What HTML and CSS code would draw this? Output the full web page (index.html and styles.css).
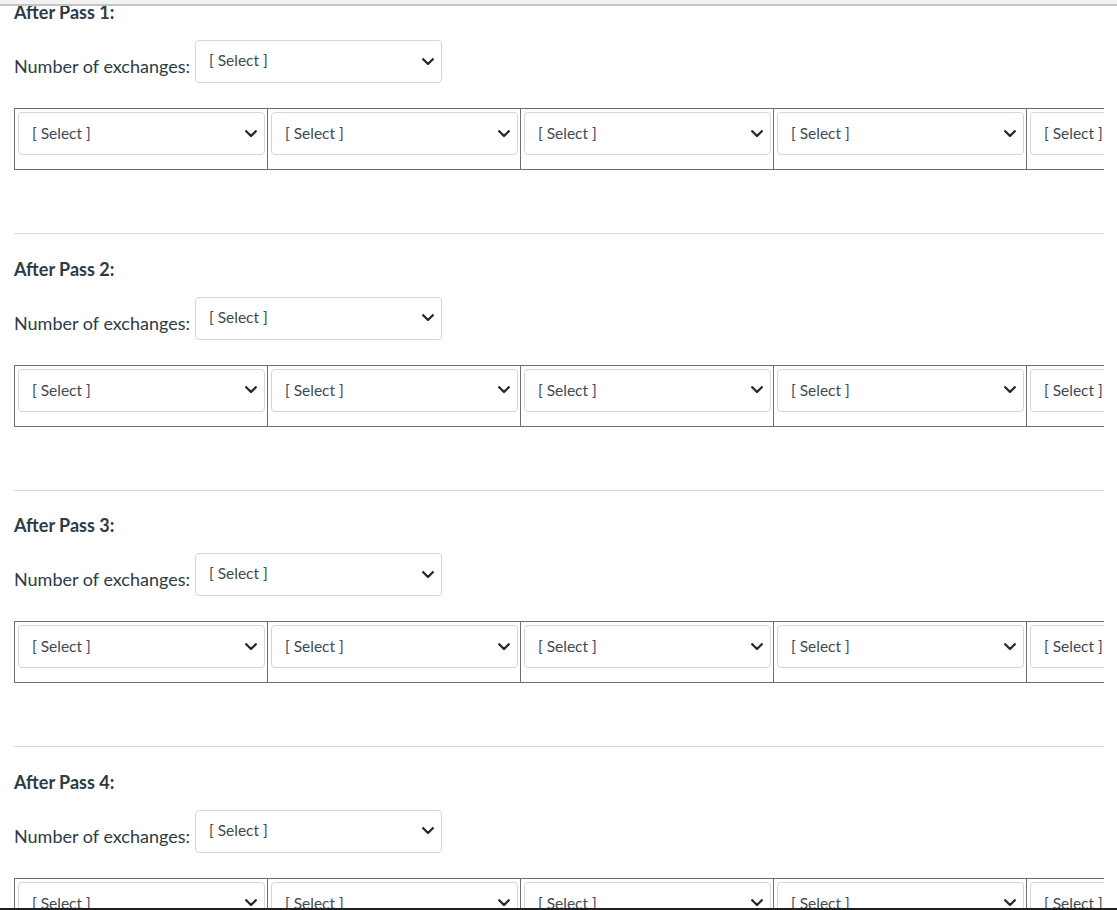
FILE: index.html
```html
<!DOCTYPE html>
<html lang="en">
<head>
<meta charset="utf-8">
<title>Passes</title>
<link rel="stylesheet" href="styles.css">
</head>
<body>
<div class="topbar"></div>
<main class="page">
  <section class="pass">
    <h4 class="pass-title">After Pass 1:</h4>
    <div class="exchanges">
      <span class="exchanges-label">Number of exchanges:</span>
      <div class="select select-wide"><span>[ Select ]</span><svg class="chev" viewBox="0 0 12 8" width="12" height="8"><polyline points="1.2,1.2 6,6 10.8,1.2"/></svg></div>
    </div>
    <div class="table-wrap">
      <div class="cells">
        <div class="cell"><div class="select"><span>[ Select ]</span><svg class="chev" viewBox="0 0 12 8" width="12" height="8"><polyline points="1.2,1.2 6,6 10.8,1.2"/></svg></div></div>
        <div class="cell"><div class="select"><span>[ Select ]</span><svg class="chev" viewBox="0 0 12 8" width="12" height="8"><polyline points="1.2,1.2 6,6 10.8,1.2"/></svg></div></div>
        <div class="cell"><div class="select"><span>[ Select ]</span><svg class="chev" viewBox="0 0 12 8" width="12" height="8"><polyline points="1.2,1.2 6,6 10.8,1.2"/></svg></div></div>
        <div class="cell"><div class="select"><span>[ Select ]</span><svg class="chev" viewBox="0 0 12 8" width="12" height="8"><polyline points="1.2,1.2 6,6 10.8,1.2"/></svg></div></div>
        <div class="cell"><div class="select"><span>[ Select ]</span><svg class="chev" viewBox="0 0 12 8" width="12" height="8"><polyline points="1.2,1.2 6,6 10.8,1.2"/></svg></div></div>
      </div>
    </div>
    <hr class="rule">
  </section>
  <section class="pass">
    <h4 class="pass-title">After Pass 2:</h4>
    <div class="exchanges">
      <span class="exchanges-label">Number of exchanges:</span>
      <div class="select select-wide"><span>[ Select ]</span><svg class="chev" viewBox="0 0 12 8" width="12" height="8"><polyline points="1.2,1.2 6,6 10.8,1.2"/></svg></div>
    </div>
    <div class="table-wrap">
      <div class="cells">
        <div class="cell"><div class="select"><span>[ Select ]</span><svg class="chev" viewBox="0 0 12 8" width="12" height="8"><polyline points="1.2,1.2 6,6 10.8,1.2"/></svg></div></div>
        <div class="cell"><div class="select"><span>[ Select ]</span><svg class="chev" viewBox="0 0 12 8" width="12" height="8"><polyline points="1.2,1.2 6,6 10.8,1.2"/></svg></div></div>
        <div class="cell"><div class="select"><span>[ Select ]</span><svg class="chev" viewBox="0 0 12 8" width="12" height="8"><polyline points="1.2,1.2 6,6 10.8,1.2"/></svg></div></div>
        <div class="cell"><div class="select"><span>[ Select ]</span><svg class="chev" viewBox="0 0 12 8" width="12" height="8"><polyline points="1.2,1.2 6,6 10.8,1.2"/></svg></div></div>
        <div class="cell"><div class="select"><span>[ Select ]</span><svg class="chev" viewBox="0 0 12 8" width="12" height="8"><polyline points="1.2,1.2 6,6 10.8,1.2"/></svg></div></div>
      </div>
    </div>
    <hr class="rule">
  </section>
  <section class="pass">
    <h4 class="pass-title">After Pass 3:</h4>
    <div class="exchanges">
      <span class="exchanges-label">Number of exchanges:</span>
      <div class="select select-wide"><span>[ Select ]</span><svg class="chev" viewBox="0 0 12 8" width="12" height="8"><polyline points="1.2,1.2 6,6 10.8,1.2"/></svg></div>
    </div>
    <div class="table-wrap">
      <div class="cells">
        <div class="cell"><div class="select"><span>[ Select ]</span><svg class="chev" viewBox="0 0 12 8" width="12" height="8"><polyline points="1.2,1.2 6,6 10.8,1.2"/></svg></div></div>
        <div class="cell"><div class="select"><span>[ Select ]</span><svg class="chev" viewBox="0 0 12 8" width="12" height="8"><polyline points="1.2,1.2 6,6 10.8,1.2"/></svg></div></div>
        <div class="cell"><div class="select"><span>[ Select ]</span><svg class="chev" viewBox="0 0 12 8" width="12" height="8"><polyline points="1.2,1.2 6,6 10.8,1.2"/></svg></div></div>
        <div class="cell"><div class="select"><span>[ Select ]</span><svg class="chev" viewBox="0 0 12 8" width="12" height="8"><polyline points="1.2,1.2 6,6 10.8,1.2"/></svg></div></div>
        <div class="cell"><div class="select"><span>[ Select ]</span><svg class="chev" viewBox="0 0 12 8" width="12" height="8"><polyline points="1.2,1.2 6,6 10.8,1.2"/></svg></div></div>
      </div>
    </div>
    <hr class="rule">
  </section>
  <section class="pass">
    <h4 class="pass-title">After Pass 4:</h4>
    <div class="exchanges">
      <span class="exchanges-label">Number of exchanges:</span>
      <div class="select select-wide"><span>[ Select ]</span><svg class="chev" viewBox="0 0 12 8" width="12" height="8"><polyline points="1.2,1.2 6,6 10.8,1.2"/></svg></div>
    </div>
    <div class="table-wrap">
      <div class="cells">
        <div class="cell"><div class="select"><span>[ Select ]</span><svg class="chev" viewBox="0 0 12 8" width="12" height="8"><polyline points="1.2,1.2 6,6 10.8,1.2"/></svg></div></div>
        <div class="cell"><div class="select"><span>[ Select ]</span><svg class="chev" viewBox="0 0 12 8" width="12" height="8"><polyline points="1.2,1.2 6,6 10.8,1.2"/></svg></div></div>
        <div class="cell"><div class="select"><span>[ Select ]</span><svg class="chev" viewBox="0 0 12 8" width="12" height="8"><polyline points="1.2,1.2 6,6 10.8,1.2"/></svg></div></div>
        <div class="cell"><div class="select"><span>[ Select ]</span><svg class="chev" viewBox="0 0 12 8" width="12" height="8"><polyline points="1.2,1.2 6,6 10.8,1.2"/></svg></div></div>
        <div class="cell"><div class="select"><span>[ Select ]</span><svg class="chev" viewBox="0 0 12 8" width="12" height="8"><polyline points="1.2,1.2 6,6 10.8,1.2"/></svg></div></div>
      </div>
    </div>
    <hr class="rule">
  </section>
</main>
<div class="bottombar"></div>
</body>
</html>
```

FILE: styles.css
```css
html, body {
  margin: 0;
  padding: 0;
  background: #ffffff;
}

body {
  font-family: Lato, "Open Sans", "Liberation Sans", sans-serif;
  color: #2d3b45;
  height: 910px;
  overflow: hidden;
}

.topbar {
  position: fixed;
  top: 0;
  left: 0;
  right: 0;
  height: 4px;
  background: #f2f2f2;
  border-bottom: 2px solid #c4c4c4;
  z-index: 5;
}

.bottombar {
  position: fixed;
  left: 0;
  right: 0;
  bottom: 0;
  height: 2px;
  background: #1e1e1e;
  z-index: 5;
}

.page {
  padding: 0 14px;
  width: 1090px;
}

.pass {
  display: flex;
  flex-direction: column;
}

.pass-title {
  margin: 0;
  height: 24px;
  line-height: 24px;
  font-size: 18px;
  font-weight: 700;
  color: #2d3b45;
}

.pass + .pass .pass-title {
  margin-top: 22.67px;
}

.exchanges {
  display: flex;
  align-items: flex-end;
  margin-top: 17px;
  height: 42px;
}

.exchanges-label {
  font-size: 18px;
  line-height: 24px;
  margin-bottom: 5px;
  margin-right: 5px;
}

.select {
  box-sizing: border-box;
  display: flex;
  align-items: center;
  justify-content: space-between;
  border: 1px solid #d3d7da;
  border-radius: 4px;
  background: #ffffff;
  font-size: 15.5px;
  color: #3e4a54;
  padding: 0 7px 0 13px;
}

.select span {
  margin-top: -1px;
}

.select-wide {
  width: 247px;
  height: 43px;
}

.select-wide span {
  margin-top: -3px;
}

.chev {
  fill: none;
  stroke: #222a30;
  stroke-width: 2.3;
  stroke-linecap: round;
  stroke-linejoin: round;
  flex: none;
}

.table-wrap {
  margin-top: 25px;
  width: 1090px;
  overflow: hidden;
  border-bottom: 1px solid #6f6f6f;
  box-sizing: border-box;
  height: 62px;
  border-top: 1px solid #6f6f6f;
}

.cells {
  display: flex;
  width: 1300px;
}

.cell {
  box-sizing: border-box;
  flex: none;
  width: 253px;
  height: 60px;
  border-left: 1px solid #6f6f6f;
  padding: 3px 2px 0 3px;
}

.cell .select {
  width: 247px;
  height: 43px;
}

.rule {
  margin: 63px 0 0 0;
  border: 0;
  border-top: 1px solid #d5d9dc;
  height: 0;
}
```
